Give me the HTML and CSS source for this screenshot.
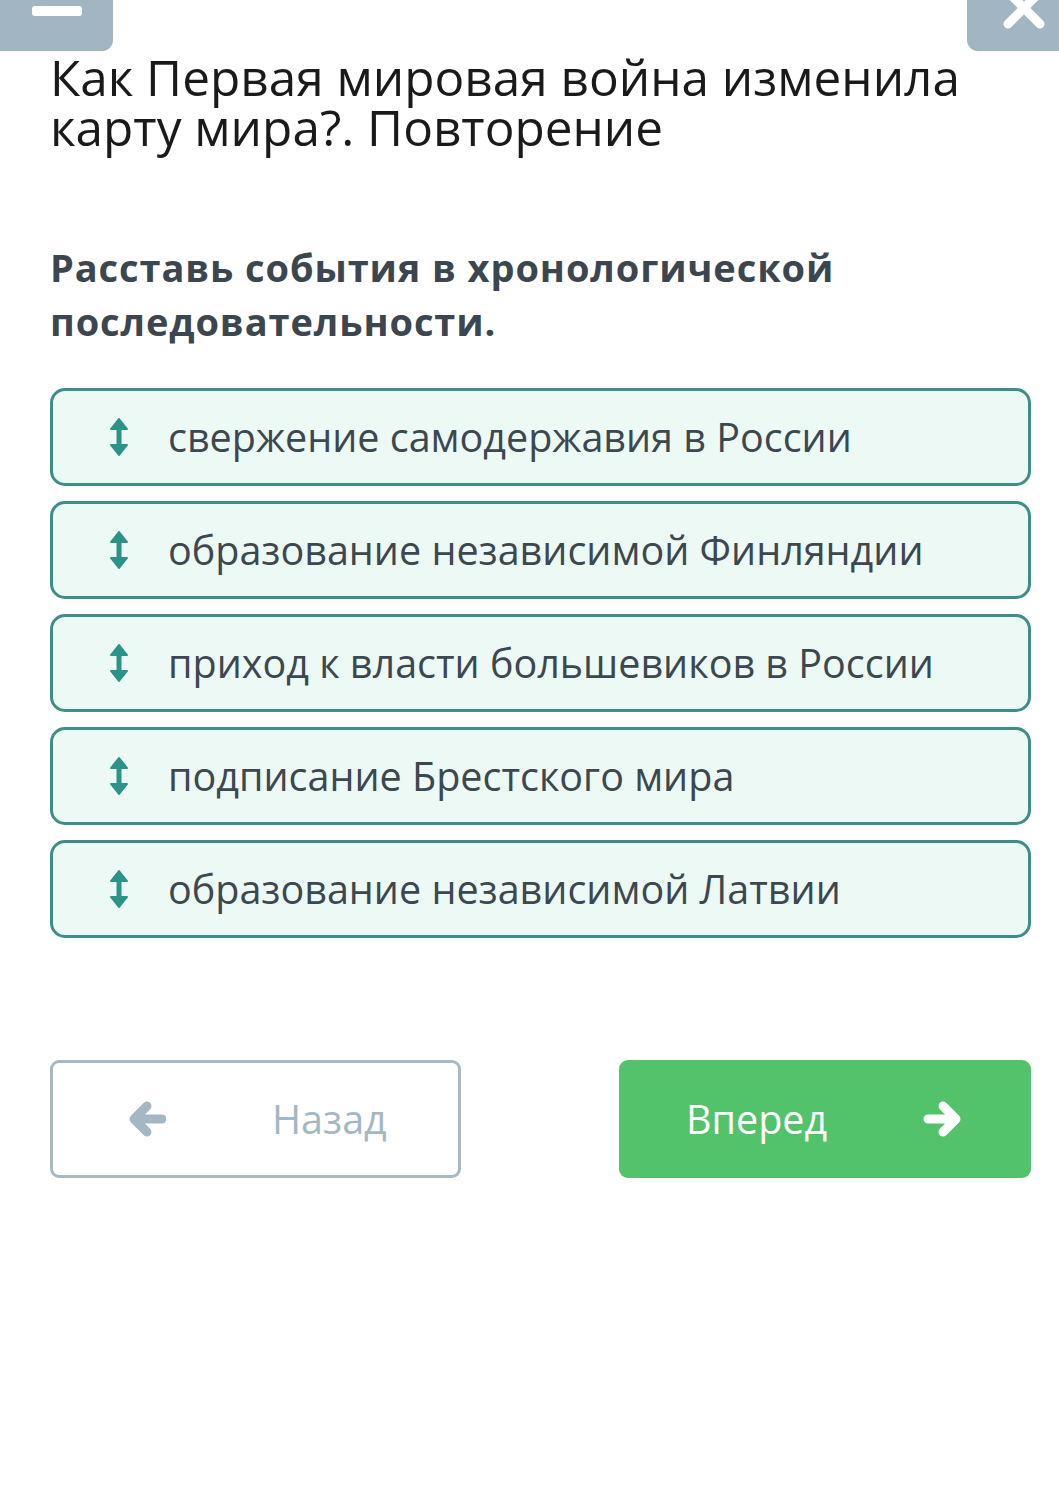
FILE: index.html
```html
<!DOCTYPE html>
<html lang="ru">
<head>
<meta charset="utf-8">
<link rel="stylesheet" href="styles.css">
</head>
<body>
<div class="topbar">
  <div class="tb-btn tb-left"><span class="minus"></span></div>
  <div class="tb-btn tb-right">
    <svg class="x-icon" width="60" height="40" viewBox="0 0 60 40"><path d="M14 -8 L30 8 L46 -8 M14 24 L30 8 L46 24" stroke="#fff" stroke-width="9" stroke-linecap="round" stroke-linejoin="round" fill="none"/></svg>
  </div>
</div>
<main class="page">
  <h1 class="title">Как Первая мировая война изменила карту мира?. Повторение</h1>
  <h2 class="task">Расставь события в хронологической последовательности.</h2>
  <ul class="items">
    <li class="item"><svg class="updown" width="18" height="38" viewBox="0 0 18 38"><path d="M9 1 L17 11 L1 11 Z M9 37 L17 27 L1 27 Z" fill="#2b9388" stroke="#2b9388" stroke-width="2" stroke-linejoin="round"/><rect x="6.5" y="9" width="5" height="20" fill="#2b9388"/></svg><span>свержение самодержавия в России</span></li>
    <li class="item"><svg class="updown" width="18" height="38" viewBox="0 0 18 38"><path d="M9 1 L17 11 L1 11 Z M9 37 L17 27 L1 27 Z" fill="#2b9388" stroke="#2b9388" stroke-width="2" stroke-linejoin="round"/><rect x="6.5" y="9" width="5" height="20" fill="#2b9388"/></svg><span>образование независимой Финляндии</span></li>
    <li class="item"><svg class="updown" width="18" height="38" viewBox="0 0 18 38"><path d="M9 1 L17 11 L1 11 Z M9 37 L17 27 L1 27 Z" fill="#2b9388" stroke="#2b9388" stroke-width="2" stroke-linejoin="round"/><rect x="6.5" y="9" width="5" height="20" fill="#2b9388"/></svg><span>приход к власти большевиков в России</span></li>
    <li class="item"><svg class="updown" width="18" height="38" viewBox="0 0 18 38"><path d="M9 1 L17 11 L1 11 Z M9 37 L17 27 L1 27 Z" fill="#2b9388" stroke="#2b9388" stroke-width="2" stroke-linejoin="round"/><rect x="6.5" y="9" width="5" height="20" fill="#2b9388"/></svg><span>подписание Брестского мира</span></li>
    <li class="item"><svg class="updown" width="18" height="38" viewBox="0 0 18 38"><path d="M9 1 L17 11 L1 11 Z M9 37 L17 27 L1 27 Z" fill="#2b9388" stroke="#2b9388" stroke-width="2" stroke-linejoin="round"/><rect x="6.5" y="9" width="5" height="20" fill="#2b9388"/></svg><span>образование независимой Латвии</span></li>
  </ul>
  <div class="nav">
    <button class="btn btn-back">
      <svg class="arrow" width="38" height="36" viewBox="0 0 38 36"><path d="M34 18 H8 M19 5 L6 18 L19 31" stroke="#a4b7c4" stroke-width="9" stroke-linecap="round" stroke-linejoin="round" fill="none"/></svg>
      <span class="btn-label back-label">Назад</span>
    </button>
    <button class="btn btn-next">
      <span class="btn-label next-label">Вперед</span>
      <svg class="arrow" width="40" height="36" viewBox="0 0 40 36"><path d="M5 18 H31 M20 5 L33 18 L20 31" stroke="#fff" stroke-width="9" stroke-linecap="round" stroke-linejoin="round" fill="none"/></svg>
    </button>
  </div>
</main>
</body>
</html>
```
FILE: styles.css
```css
* { box-sizing: border-box; }
html, body { margin: 0; padding: 0; background: #fff; }
body { font-family: "Open Sans", "Noto Sans", sans-serif; }

.topbar {
  display: flex;
  justify-content: space-between;
  height: 51px;
}
.tb-btn {
  background: #a2b5c2;
  height: 51px;
  position: relative;
  overflow: hidden;
}
.tb-left {
  width: 113px;
  border-bottom-right-radius: 11px;
}
.tb-right {
  width: 92px;
  border-bottom-left-radius: 11px;
}
.minus {
  position: absolute;
  left: 32px;
  top: 6px;
  width: 50px;
  height: 10px;
  background: #fff;
  border-radius: 3px;
}
.x-icon {
  position: absolute;
  left: 27px;
  top: 0;
}

.page {
  padding: 0 28px 0 50px;
}
.title {
  margin: 1px 0 0;
  font-size: 49.5px;
  line-height: 50px;
  font-weight: 400;
  color: #1a1a1a;
}
.task {
  margin: 88px 0 0;
  font-size: 38px;
  line-height: 54px;
  letter-spacing: 0.9px;
  font-weight: 700;
  color: #3c464f;
}
.items {
  list-style: none;
  margin: 40px 0 0;
  padding: 0;
  display: flex;
  flex-direction: column;
  gap: 15px;
}
.item {
  height: 98px;
  border: 3px solid #3d8e86;
  border-radius: 15px;
  background: #edf9f5;
  display: flex;
  align-items: center;
  padding-left: 57px;
  font-size: 39.5px;
  color: #3c474f;
}
.updown { flex: none; margin-right: 40px; }

.nav {
  margin-top: 122px;
  display: flex;
  justify-content: space-between;
}
.btn {
  font-family: inherit;
  height: 118px;
  width: 412px;
  border-radius: 9px;
  display: flex;
  align-items: center;
  padding: 0;
  font-size: 39.5px;
  cursor: pointer;
}
.btn-back {
  width: 411px;
  background: #fff;
  border: 3px solid #a9b9c3;
  color: #a4b7c4;
  padding-left: 75px;
}
.back-label { margin-left: 106px; }
.btn-next {
  background: #52c26b;
  border: none;
  color: #fff;
  padding-left: 67px;
}
.next-label { margin-right: 96px; }
.arrow { flex: none; }
```
